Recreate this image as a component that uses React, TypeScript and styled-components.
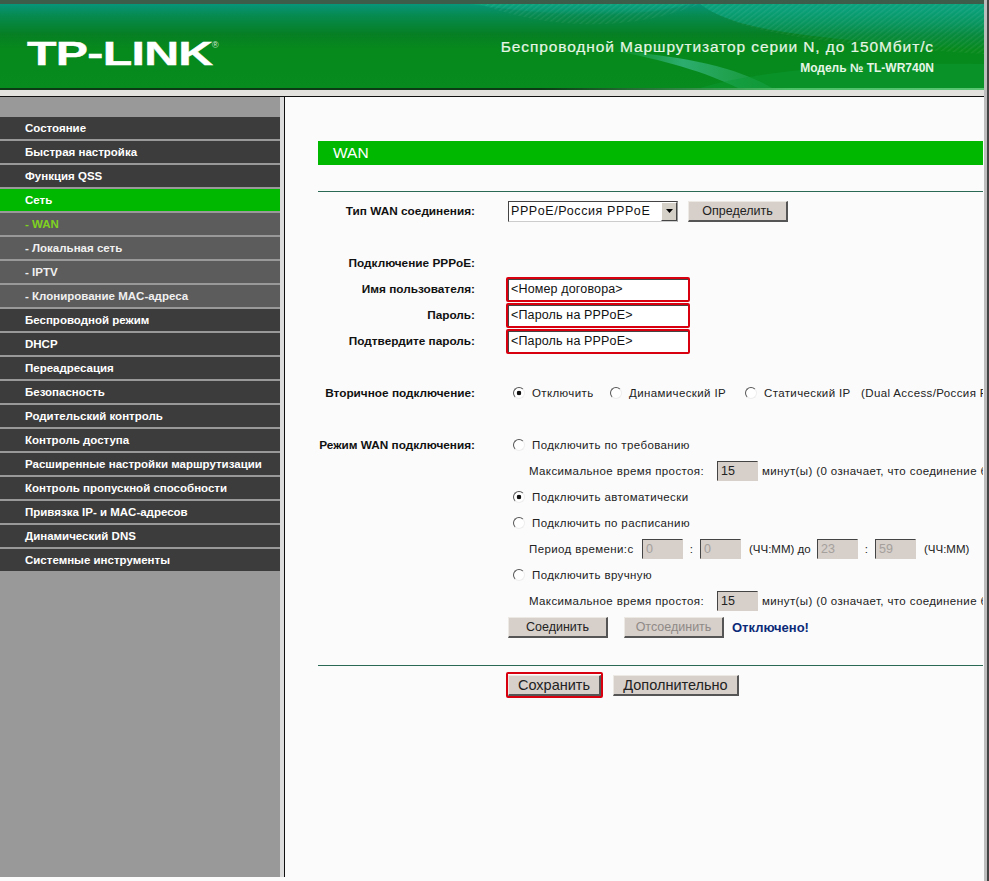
import React from 'react';
import styled, { createGlobalStyle } from 'styled-components';

const GlobalStyle = createGlobalStyle`
    html, body{
        margin:0;
        padding:0;
        height:881px;
        overflow:hidden;
        background:#d8d5d1;
    }
    body{
        font-family:"Liberation Sans", Arial, sans-serif;
    }
`;

const menuItems = [
    { text: 'Состояние' },
    { text: 'Быстрая настройка' },
    { text: 'Функция QSS' },
    { text: 'Сеть', active: true },
    { text: '- WAN', sub: true, current: true },
    { text: '- Локальная сеть', sub: true },
    { text: '- IPTV', sub: true },
    { text: '- Клонирование MAC-адреса', sub: true },
    { text: 'Беспроводной режим' },
    { text: 'DHCP' },
    { text: 'Переадресация' },
    { text: 'Безопасность' },
    { text: 'Родительский контроль' },
    { text: 'Контроль доступа' },
    { text: 'Расширенные настройки маршрутизации' },
    { text: 'Контроль пропускной способности' },
    { text: 'Привязка IP- и MAC-адресов' },
    { text: 'Динамический DNS' },
    { text: 'Системные инструменты' },
];

function HeaderArt() {
    return (
        <Art viewBox="0 0 984 84" preserveAspectRatio="none">
            <defs>
                <pattern id="stripes" width="4" height="4" patternUnits="userSpaceOnUse" patternTransform="rotate(-38)">
                    <rect width="4" height="1.4" fill="#ffffff" opacity="0.07" />
                </pattern>
                <linearGradient id="teal" x1="0" y1="0" x2="0" y2="1">
                    <stop offset="0" stopColor="#0aa37c" stopOpacity="0.9" />
                    <stop offset="1" stopColor="#0aa37c" stopOpacity="0" />
                </linearGradient>
                <linearGradient id="swoosh" x1="0" y1="0" x2="1" y2="0">
                    <stop offset="0" stopColor="#39b98a" stopOpacity="0" />
                    <stop offset="0.45" stopColor="#39b98a" stopOpacity="0.75" />
                    <stop offset="1" stopColor="#2fb066" stopOpacity="0.35" />
                </linearGradient>
            </defs>
            <path d="M700 0 C735 26 800 34 984 46 L984 0 Z" fill="url(#teal)" />
            <path d="M470 0 C540 10 620 18 690 0 Z" fill="url(#teal)" />
            <path d="M480 0 C560 30 640 24 700 0 Z M700 0 C740 30 820 40 984 50 L984 0 Z" fill="url(#stripes)" />
            <path d="M610 46 C680 52 735 62 772 84 L738 84 C705 68 665 56 610 46 Z" fill="url(#swoosh)" />
            <path d="M700 84 C760 66 860 58 984 60 L984 84 Z" fill="#0a9b36" opacity="0.45" />
        </Art>
    );
}

function App() {
    return (
        <Page>
            <GlobalStyle />
            <Banner>
                <HeaderArt />
                <Logo>
                    <LogoText>TP-LINK</LogoText>
                    <LogoMark>®</LogoMark>
                </Logo>
                <BannerInfo>
                    <ProductName>Беспроводной Маршрутизатор серии N, до 150Мбит/с</ProductName>
                    <ModelName>Модель № TL-WR740N</ModelName>
                </BannerInfo>
            </Banner>
            <BannerEdge />
            <Frames>
                <Sidebar>
                    {menuItems.map((item) => (
                        <MenuItem key={item.text} $active={item.active} $sub={item.sub} $current={item.current}>
                            {item.text}
                        </MenuItem>
                    ))}
                </Sidebar>
                <Content>
                    <TitleBar>WAN</TitleBar>
                    <Rule />
                    <Row>
                        <Label>Тип WAN соединения:</Label>
                        <Field>
                            <SelectBox>
                                <SelectInput defaultValue="pppoe">
                                    <option value="pppoe">PPPoE/Россия PPPoE</option>
                                </SelectInput>
                                <SelectArrow>
                                    <svg width="7" height="4" viewBox="0 0 7 4"><path d="M0 0h7L3.5 4z" fill="#000" /></svg>
                                </SelectArrow>
                            </SelectBox>
                            <Button $width={100} $left={10}>Определить</Button>
                        </Field>
                    </Row>
                    <Spacer />
                    <Row>
                        <Label>Подключение PPPoE:</Label>
                    </Row>
                    <Row>
                        <Label>Имя пользователя:</Label>
                        <Field><TextInput readOnly defaultValue="<Номер договора>" /></Field>
                    </Row>
                    <Row>
                        <Label>Пароль:</Label>
                        <Field><TextInput readOnly defaultValue="<Пароль на PPPoE>" /></Field>
                    </Row>
                    <Row>
                        <Label>Подтвердите пароль:</Label>
                        <Field><TextInput readOnly defaultValue="<Пароль на PPPoE>" /></Field>
                    </Row>
                    <Spacer />
                    <Row>
                        <Label>Вторичное подключение:</Label>
                        <Field>
                            <Radio name="second" defaultChecked />
                            <Text $width={72}>Отключить</Text>
                            <Radio name="second" />
                            <Text $width={110}>Динамический IP</Text>
                            <Radio name="second" />
                            <Text $width={97}>Статический IP</Text>
                            <Text>(Dual Access/Россия PPPoE)</Text>
                        </Field>
                    </Row>
                    <Spacer />
                    <Row>
                        <Label>Режим WAN подключения:</Label>
                        <Field>
                            <Radio name="mode" />
                            <Text>Подключить по требованию</Text>
                        </Field>
                    </Row>
                    <Row>
                        <SubField>
                            <Text $width={188}>Максимальное время простоя:</Text>
                            <NumberInput readOnly defaultValue="15" />
                            <Text $left={4}>минут(ы) (0 означает, что соединение будет активно всегда)</Text>
                        </SubField>
                    </Row>
                    <Row>
                        <Field>
                            <Radio name="mode" defaultChecked />
                            <Text>Подключить автоматически</Text>
                        </Field>
                    </Row>
                    <Row>
                        <Field>
                            <Radio name="mode" />
                            <Text>Подключить по расписанию</Text>
                        </Field>
                    </Row>
                    <Row>
                        <SubField>
                            <Text $width={113}>Период времени:с</Text>
                            <NumberInput readOnly disabled defaultValue="0" />
                            <Colon>:</Colon>
                            <NumberInput readOnly disabled defaultValue="0" />
                            <Text $width={68} $left={8} $tight>(ЧЧ:ММ) до</Text>
                            <NumberInput readOnly disabled defaultValue="23" />
                            <Colon>:</Colon>
                            <NumberInput readOnly disabled defaultValue="59" />
                            <Text $left={8} $tight>(ЧЧ:ММ)</Text>
                        </SubField>
                    </Row>
                    <Row>
                        <Field>
                            <Radio name="mode" />
                            <Text>Подключить вручную</Text>
                        </Field>
                    </Row>
                    <Row>
                        <SubField>
                            <Text $width={188}>Максимальное время простоя:</Text>
                            <NumberInput readOnly defaultValue="15" />
                            <Text $left={4}>минут(ы) (0 означает, что соединение будет активно всегда)</Text>
                        </SubField>
                    </Row>
                    <Row>
                        <Field>
                            <Button $width={100}>Соединить</Button>
                            <Button $width={100} $left={16} disabled>Отсоединить</Button>
                            <Status>Отключено!</Status>
                        </Field>
                    </Row>
                    <FooterRule />
                    <SaveRow>
                        <SaveOutline><Button $width={93} $large>Сохранить</Button></SaveOutline>
                        <Button $width={126} $left={10} $large>Дополнительно</Button>
                    </SaveRow>
                </Content>
            </Frames>
        </Page>
    );
}

const Page = styled.div`
    width:989px;
    height:881px;
    display:flex;
    flex-direction:column;
    overflow:hidden;
    background:linear-gradient(90deg, #fbfbfb 984px, #bdbdbd 984px, #bdbdbd 987px, #444 987px);
`;
const Banner = styled.header`
    position:relative;
    box-sizing:border-box;
    height:88px;
    width:984px;
    border-top:4px solid #3d5c4a;
    background:linear-gradient(180deg, #07957a 0, #068a4e 12px, #067f24 30px, #078a1c 46px, #078a1e 100%);
    display:flex;
    align-items:flex-start;
    justify-content:space-between;
    overflow:hidden;
`;
const Art = styled.svg`
    position:absolute;
    left:0;
    top:0;
    width:984px;
    height:84px;
`;
const Logo = styled.div`
    position:relative;
    margin:33px 0 0 27px;
    height:32px;
    width:195px;
    display:flex;
    color:#fff;
`;
const LogoText = styled.span`
    font-size:34px;
    line-height:32px;
    font-weight:700;
    transform:scaleX(1.42);
    transform-origin:left center;
    letter-spacing:-0.5px;
    -webkit-text-stroke:0.4px #fff;
`;
const LogoMark = styled.span`
    position:absolute;
    left:185px;
    top:4px;
    font-size:9px;
    line-height:9px;
    color:#cfe8d4;
`;
const BannerInfo = styled.div`
    position:relative;
    margin:34px 50px 0 0;
    display:flex;
    flex-direction:column;
    align-items:flex-end;
    color:#e6f6e6;
`;
const ProductName = styled.div`
    font-size:15.5px;
    line-height:18px;
    letter-spacing:0.9px;
    -webkit-text-stroke:0.2px #e6f6e6;
`;
const ModelName = styled.div`
    margin-top:5px;
    font-size:12px;
    line-height:14px;
    font-weight:700;
`;
const BannerEdge = styled.div`
    box-sizing:border-box;
    height:9px;
    width:984px;
    flex:none;
    background:linear-gradient(90deg, #0b3a14 0, #0b3a14 55%, #4fc06a 80%, #59c674 100%) top/100% 2px no-repeat, #e4e2df;
    border-bottom:1px solid #111;
`;
const Frames = styled.div`
    flex:none;
    width:984px;
    height:780px;
    display:flex;
`;
const Sidebar = styled.nav`
    box-sizing:border-box;
    flex:none;
    width:285px;
    height:100%;
    padding-top:20px;
    padding-right:5px;
    background:#999 linear-gradient(90deg, #999 280px, #dcdcdc 280px, #dcdcdc 284px, #111 284px);
    display:flex;
    flex-direction:column;
    gap:2px;
`;
const MenuItem = styled.div<{ $active?: boolean; $sub?: boolean; $current?: boolean }>`
    height:22px;
    flex:none;
    padding-left:25px;
    font-size:11.5px;
    line-height:22px;
    font-weight:700;
    white-space:nowrap;
    color:${(p) => (p.$current ? '#7fd31f' : p.$sub ? '#f0f0f0' : '#fff')};
    background:${(p) => (p.$active ? '#00b800' : p.$sub ? '#5c5c5c' : '#3c3c3c')};
`;
const Content = styled.main`
    flex:1;
    min-width:0;
    overflow:hidden;
    padding:44px 1px 0 33px;
    background:#fbfbfb;
    box-sizing:border-box;
`;
const TitleBar = styled.h1`
    margin:0;
    height:24px;
    padding-left:15px;
    background:#00b800;
    color:#fff;
    font-size:15.5px;
    line-height:24px;
    font-weight:400;
`;
const Rule = styled.div`
    height:1px;
    margin:26px 0 6px;
    background:#2a6a55;
`;
const Row = styled.div`
    height:26px;
    display:flex;
    align-items:center;
    white-space:nowrap;
    overflow:hidden;
`;
const Spacer = styled.div`
    height:26px;
`;
const Label = styled.div`
    flex:none;
    width:157px;
    text-align:right;
    font-size:11.8px;
    font-weight:700;
    color:#111;
`;
const Field = styled.div`
    margin-left:auto;
    flex:none;
    width:476px;
    display:flex;
    align-items:center;
    font-size:11.5px;
    letter-spacing:0.38px;
    color:#222;
`;
const SubField = styled(Field)`
    box-sizing:border-box;
    padding-left:22px;
`;
const SelectBox = styled.div`
    box-sizing:border-box;
    width:170px;
    height:21px;
    margin-left:1px;
    display:flex;
    background:#fff;
    border:1px solid #444;
    border-right-color:#999;
    border-bottom-color:#ccc;
`;
const SelectInput = styled.select`
    appearance:none;
    flex:1;
    min-width:0;
    border:0;
    padding:0 0 0 2px;
    background:transparent;
    font-family:inherit;
    font-size:12.5px;
    letter-spacing:0.6px;
    color:#111;
`;
const SelectArrow = styled.div`
    flex:none;
    width:16px;
    display:flex;
    align-items:center;
    justify-content:center;
    background:#d4d0c8;
    border:1px solid;
    border-color:#fff #444 #444 #fff;
    box-sizing:border-box;
`;
const Button = styled.button<{ $width: number; $left?: number; $large?: boolean }>`
    box-sizing:border-box;
    flex:none;
    width:${(p) => p.$width}px;
    height:21px;
    margin-left:${(p) => p.$left ?? 1}px;
    padding:0;
    background:#d6cfca;
    border:1px solid;
    border-color:#ece8e4 #555 #555 #ece8e4;
    border-width:1px 2px 2px 1px;
    font-family:inherit;
    font-size:${(p) => (p.$large ? '14.5px' : '12.5px')};
    color:#222;
    &:disabled{
        color:#8f8a86;
    }
`;
const TextInput = styled.input`
    box-sizing:border-box;
    width:184px;
    height:25px;
    margin-left:-1px;
    padding:0 0 1px 3px;
    border:2px solid #d8000f;
    border-radius:2px;
    outline:none;
    box-shadow:inset 1px 1px 0 #444;
    background:#fff;
    font-family:inherit;
    font-size:12.5px;
    letter-spacing:0.15px;
    color:#111;
`;
const Radio = styled.input.attrs({ type: 'radio' })`
    appearance:none;
    flex:none;
    box-sizing:border-box;
    width:12px;
    height:12px;
    margin:0 7px 0 6px;
    border-radius:50%;
    border:1px solid;
    border-color:#555 #eee #eee #555;
    background:#fff;
    &:checked{
        background:radial-gradient(circle, #111 0, #111 2px, #fff 2.6px);
    }
`;
const Text = styled.span<{ $width?: number; $left?: number; $tight?: boolean }>`
    flex:none;
    box-sizing:border-box;
    width:${(p) => (p.$width ? `${p.$width}px` : 'auto')};
    margin-left:${(p) => p.$left ?? 0}px;
    letter-spacing:${(p) => (p.$tight ? '0' : 'inherit')};
    white-space:nowrap;
`;
const NumberInput = styled.input`
    box-sizing:border-box;
    flex:none;
    width:41px;
    height:20px;
    padding:0 0 0 3px;
    border:1px solid;
    border-color:#444 #d6cfca #d6cfca #444;
    background:#d6cfca;
    font-family:inherit;
    font-size:12.5px;
    color:#222;
    &:disabled{
        color:#a5a09c;
    }
`;
const Colon = styled.span`
    flex:none;
    width:17px;
    text-align:center;
`;
const Status = styled.strong`
    margin-left:8px;
    font-size:13px;
    letter-spacing:0;
    color:#0b2a78;
`;
const FooterRule = styled.div`
    height:1px;
    margin-top:25px;
    background:#2a6a55;
`;
const SaveRow = styled.div`
    display:flex;
    align-items:center;
    margin:6px 0 0 188px;
    height:26px;
`;
const SaveOutline = styled.div`
    box-sizing:border-box;
    flex:none;
    display:flex;
    align-items:center;
    width:97px;
    height:26px;
    border:2px solid #d8000f;
    border-radius:2px;
    button{
        margin-left:0;
    }
`;
export default App;
